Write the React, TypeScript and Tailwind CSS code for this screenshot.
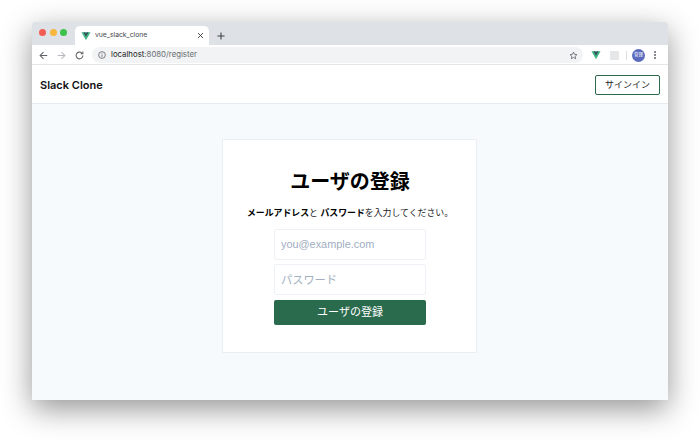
import React from "react";

const font = { fontFamily: '"Inter", "Noto Sans CJK JP", sans-serif' };

function VueLogo({ size }: { size: number }) {
  return (
    <svg width={size} height={size} viewBox="0 0 24 24">
      <path d="M1 3h22L12 22z" fill="#41b883" />
      <path d="M6 3h4l2 3.5L14 3h4l-6 10.5z" fill="#35495e" />
    </svg>
  );
}

export default function App() {
  return (
    <div className="w-[700px] h-[441px] bg-white overflow-hidden pt-[22px] pl-[32px]" style={font}>
      <div className="w-[636px] h-[378px] flex flex-col bg-white rounded-t-[3px] shadow-[0_9px_30px_rgba(0,0,0,0.42)]">
        {/* Tab strip */}
        <div className="h-[23px] bg-[#dee1e6] flex items-end rounded-t-[3px]">
          <div className="flex items-center gap-[3.5px] pl-[7px] h-[23px] pb-[3px]">
            <span className="w-[7px] h-[7px] rounded-full bg-[#f25c55]" />
            <span className="w-[7px] h-[7px] rounded-full bg-[#f6b73c]" />
            <span className="w-[7px] h-[7px] rounded-full bg-[#3cc24a]" />
          </div>
          <div className="ml-[8px] w-[134px] h-[19px] bg-white rounded-t-[5px] flex items-center pl-[6px] pr-[5px]">
            <VueLogo size={10} />
            <span className="ml-[4px] text-[6.8px] text-[#45484d] flex-1">vue_slack_clone</span>
            <svg width="7" height="7" viewBox="0 0 10 10" stroke="#45484d" strokeWidth="1.4">
              <path d="M1.5 1.5l7 7M8.5 1.5l-7 7" />
            </svg>
          </div>
          <div className="ml-[8px] h-[19px] flex items-center">
            <svg width="8" height="8" viewBox="0 0 10 10" stroke="#3c4043" strokeWidth="1.3">
              <path d="M5 0.5v9M0.5 5h9" />
            </svg>
          </div>
        </div>

        {/* Toolbar */}
        <div className="h-[20px] bg-white border-b border-[#e3e5e8] flex items-center pt-[1px] pl-[7px] pr-[9px]">
          <svg width="9" height="9" viewBox="0 0 12 12" fill="none" stroke="#5f6368" strokeWidth="1.4">
            <path d="M11 6H2M6 1.5L1.5 6 6 10.5" />
          </svg>
          <svg className="ml-[9px]" width="9" height="9" viewBox="0 0 12 12" fill="none" stroke="#b6b9bd" strokeWidth="1.4">
            <path d="M1 6h9M6 1.5L10.5 6 6 10.5" />
          </svg>
          <svg className="ml-[9px]" width="9" height="9" viewBox="0 0 12 12" fill="none" stroke="#5f6368" strokeWidth="1.4">
            <path d="M10.5 6a4.5 4.5 0 1 1-1.3-3.2M10.5 0.8v2.9H7.6" />
          </svg>
          <div className="ml-[8px] w-[491px] h-[16px] bg-[#f1f3f4] rounded-full flex items-center pl-[6px] pr-[5px]">
            <svg width="8" height="8" viewBox="0 0 10 10" fill="none" stroke="#5f6368" strokeWidth="1">
              <circle cx="5" cy="5" r="4.2" />
              <path d="M5 4.4v3M5 2.4v1" />
            </svg>
            <span className="ml-[5px] text-[7.8px] text-[#202124] flex-1">
              localhost<span className="text-[#6a6e73]">:8080/register</span>
            </span>
            <svg width="9" height="9" viewBox="0 0 24 24" fill="none" stroke="#5f6368" strokeWidth="2.2">
              <path d="M12 3l2.8 5.9 6.4.8-4.7 4.4 1.2 6.4L12 17.4l-5.7 3.1 1.2-6.4L2.8 9.7l6.4-.8z" />
            </svg>
          </div>
          <div className="ml-[8px]"><VueLogo size={10} /></div>
          <span className="ml-[9px] w-[9px] h-[9px] bg-[#e6e7e9]" />
          <span className="ml-[7px] w-px h-[9px] bg-[#dcdee1]" />
          <span className="ml-[5px] w-[13px] h-[13px] rounded-full bg-[#5a6bbd] text-white text-[4.5px] flex items-center justify-center">管理</span>
          <div className="ml-[9px] flex flex-col gap-[1.5px]">
            <span className="w-[1.5px] h-[1.5px] rounded-full bg-[#5f6368]" />
            <span className="w-[1.5px] h-[1.5px] rounded-full bg-[#5f6368]" />
            <span className="w-[1.5px] h-[1.5px] rounded-full bg-[#5f6368]" />
          </div>
        </div>

        {/* Navbar */}
        <div className="h-[39px] bg-white border-b border-[#e6ebf1] flex items-center justify-between pt-[2px] pl-[8px] pr-[8px]">
          <span className="text-[11px] font-semibold text-[#111]">Slack Clone</span>
          <button className="w-[65px] h-[20px] border-[1.5px] border-[#2a6a4d] rounded-[2px] text-[9px] text-[#222] flex items-center justify-center">
            サインイン
          </button>
        </div>

        {/* Content */}
        <div className="flex-1 bg-[#f6fafd] flex justify-center pt-[35px] pr-[1px]">
          <div className="w-[255px] h-[214px] bg-white border border-[#e9eef3] rounded-[1px] flex flex-col items-center pt-[29px] pl-[1px]">
            <h1 className="text-[20px] leading-[26px] font-bold text-black">ユーザの登録</h1>
            <p className="mt-[11px] text-[8.9px] leading-[14px] text-[#222]">
              <b className="font-bold text-black">メールアドレス</b>と <b className="font-bold text-black">パスワード</b>を入力してください。
            </p>
            <input
              placeholder="you@example.com"
              className="mt-[9px] w-[152px] h-[31px] border border-[#eef1f5] rounded-[2px] px-[6px] pb-[2px] text-[10.9px] bg-white placeholder:text-[#a0aec0] outline-none font-['Liberation_Sans','Noto_Sans_CJK_JP',sans-serif]"
            />
            <input
              placeholder="パスワード"
              className="mt-[4px] w-[152px] h-[31px] border border-[#eef1f5] rounded-[2px] px-[6px] text-[11.2px] bg-white placeholder:text-[#a0aec0] outline-none"
            />
            <button className="mt-[5px] w-[152px] h-[25px] bg-[#2a6a4d] rounded-[2px] text-white text-[11px] flex items-center justify-center">
              ユーザの登録
            </button>
          </div>
        </div>
      </div>
    </div>
  );
}
